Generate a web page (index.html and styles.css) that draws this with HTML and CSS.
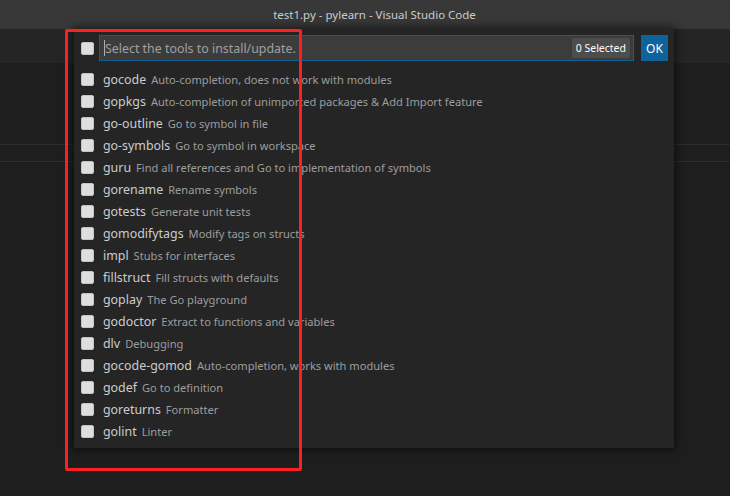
FILE: index.html
```html
<!DOCTYPE html>
<html>
<head>
<meta charset="utf-8">
<link rel="stylesheet" href="styles.css">
</head>
<body>
<div class="window">
  <div class="titlebar">test1.py - pylearn - Visual Studio Code</div>
  <div class="tabbar"></div>
  <div class="editor">
    <div class="editor-band"></div>
  </div>

  <div class="quickpick">
    <div class="qp-header">
      <span class="cb"></span>
      <div class="qp-input">
        <span class="caret"></span><span class="placeholder">Select the tools to install/update.</span>
        <span class="badge">0 Selected</span>
      </div>
      <button class="ok">OK</button>
    </div>
    <ul class="qp-list">
      <li class="row"><span class="cb"></span><span class="label">gocode</span><span class="desc">Auto-completion, does not work with modules</span></li>
      <li class="row"><span class="cb"></span><span class="label">gopkgs</span><span class="desc">Auto-completion of unimported packages &amp; Add Import feature</span></li>
      <li class="row"><span class="cb"></span><span class="label">go-outline</span><span class="desc">Go to symbol in file</span></li>
      <li class="row"><span class="cb"></span><span class="label">go-symbols</span><span class="desc">Go to symbol in workspace</span></li>
      <li class="row"><span class="cb"></span><span class="label">guru</span><span class="desc">Find all references and Go to implementation of symbols</span></li>
      <li class="row"><span class="cb"></span><span class="label">gorename</span><span class="desc">Rename symbols</span></li>
      <li class="row"><span class="cb"></span><span class="label">gotests</span><span class="desc">Generate unit tests</span></li>
      <li class="row"><span class="cb"></span><span class="label">gomodifytags</span><span class="desc">Modify tags on structs</span></li>
      <li class="row"><span class="cb"></span><span class="label">impl</span><span class="desc">Stubs for interfaces</span></li>
      <li class="row"><span class="cb"></span><span class="label">fillstruct</span><span class="desc">Fill structs with defaults</span></li>
      <li class="row"><span class="cb"></span><span class="label">goplay</span><span class="desc">The Go playground</span></li>
      <li class="row"><span class="cb"></span><span class="label">godoctor</span><span class="desc">Extract to functions and variables</span></li>
      <li class="row"><span class="cb"></span><span class="label">dlv</span><span class="desc">Debugging</span></li>
      <li class="row"><span class="cb"></span><span class="label">gocode-gomod</span><span class="desc">Auto-completion, works with modules</span></li>
      <li class="row"><span class="cb"></span><span class="label">godef</span><span class="desc">Go to definition</span></li>
      <li class="row"><span class="cb"></span><span class="label">goreturns</span><span class="desc">Formatter</span></li>
      <li class="row"><span class="cb"></span><span class="label">golint</span><span class="desc">Linter</span></li>
    </ul>
  </div>

  <div class="annotation"></div>
</div>
</body>
</html>
```

FILE: styles.css
```css
html, body {
  margin: 0;
  padding: 0;
  background: #1e1e1e;
  overflow: hidden;
}

.window {
  position: relative;
  width: 730px;
  height: 496px;
  overflow: hidden;
  font-family: "Noto Sans", "Open Sans", sans-serif;
  background: #1e1e1e;
}

.titlebar {
  height: 29px;
  background: #383838;
  color: #cccccc;
  font-size: 11.5px;
  line-height: 29px;
  text-align: center;
  padding-left: 19px;
}

.tabbar {
  height: 34px;
  background: #252526;
}

.editor {
  height: 433px;
}

.editor-band {
  margin-top: 81px;
  height: 16px;
  border-top: 1px solid #2c2c2c;
  border-bottom: 1px solid #2c2c2c;
}

.quickpick {
  position: absolute;
  left: 74px;
  top: 29px;
  width: 600px;
  height: 419px;
  box-sizing: border-box;
  background: #252526;
  box-shadow: 0 0 8px 2px rgba(0, 0, 0, 0.55);
  padding: 6px 6px 6px 7px;
}

.qp-header {
  display: flex;
  align-items: center;
  height: 26px;
}

.cb {
  display: inline-block;
  flex: none;
  width: 11px;
  height: 11px;
  background: #dedede;
  border: 1px solid #c4c4c4;
  border-radius: 2px;
}

.qp-input {
  flex: 1;
  margin-left: 5px;
  height: 26px;
  box-sizing: border-box;
  background: #3c3c3c;
  border: 1px solid #0e5f94;
  display: flex;
  align-items: center;
  padding: 0 3px 0 4px;
}

.caret {
  width: 1px;
  height: 16px;
  background: #aeafad;
}

.placeholder {
  color: #a0a0a0;
  font-size: 12.4px;
  flex: 1;
}

.badge {
  background: #4d4d4d;
  color: #ffffff;
  font-size: 10.5px;
  padding: 2px 4px;
  border-radius: 2px;
  line-height: 16px;
}

.ok {
  margin-left: 7px;
  width: 27px;
  height: 26px;
  border: none;
  background: #0e639c;
  color: #ffffff;
  font-family: inherit;
  font-size: 12px;
  padding: 0;
}

.qp-list {
  list-style: none;
  margin: 7px 0 0;
  padding: 0;
}

.row {
  display: flex;
  align-items: center;
  height: 22px;
  white-space: nowrap;
}

.label {
  margin-left: 9px;
  color: #cccccc;
  font-size: 12.4px;
}

.desc {
  margin-left: 5px;
  color: #9d9d9d;
  font-size: 11.1px;
}

.annotation {
  position: absolute;
  left: 65px;
  top: 29px;
  width: 231px;
  height: 436px;
  border: 3px solid #ff1f1f;
  border-radius: 2px;
}
```
